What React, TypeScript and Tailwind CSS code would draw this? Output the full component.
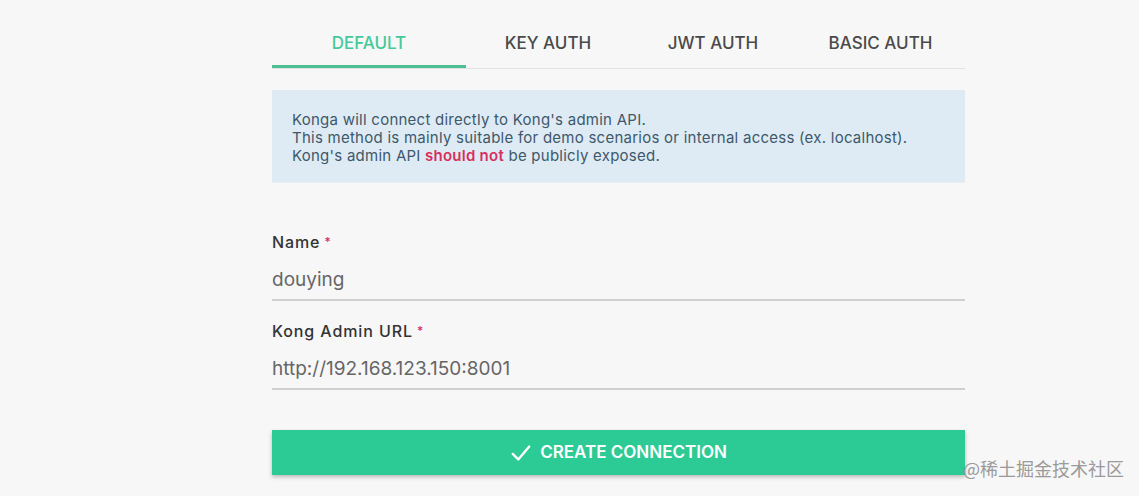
import React from 'react';

const tabs = [
  { label: 'DEFAULT', width: 'w-[194px]', active: true },
  { label: 'KEY AUTH', width: 'w-[164px]', active: false },
  { label: 'JWT AUTH', width: 'w-[166px]', active: false },
  { label: 'BASIC AUTH', width: 'w-[169px]', active: false },
];

const Field = ({ label, value }: { label: string; value: string }) => (
  <div className="flex flex-col">
    <label className="text-[16px] font-medium text-[#333] leading-5 tracking-[0.9px]">
      {label}
      <span className="text-[#d6305c] text-[12px] align-top ml-1">*</span>
    </label>
    <div className="mt-[16px] text-[19px] text-[#666] leading-6">{value}</div>
    <div className="mt-[7px] h-[2px] bg-[#cfcfcf]" />
  </div>
);

const App = () => {
  return (
    <div className="w-[1139px] h-[496px] bg-[#f7f7f7] overflow-hidden relative font-['Inter',sans-serif]">
      <div className="ml-[272px] w-[693px] pt-[31px]">
        {/* Tabs */}
        <div className="flex border-b border-[#e2e2e2]">
          {tabs.map((t) => (
            <div
              key={t.label}
              className={`${t.width} h-[37px] flex items-start justify-center text-[17px] font-medium leading-5 pt-[2px] ${
                t.active ? 'text-[#45c99a] border-b-[3px] border-[#4ebf95] -mb-[2px]' : 'text-[#4a4a4a]'
              }`}
            >
              {t.label}
            </div>
          ))}
        </div>

        {/* Info */}
        <div className="mt-[21px] h-[93px] bg-[#deebf5] border-b border-[#e8eef2] pl-[20px] pt-[21px] text-[15px] leading-[18px] tracking-[0.25px] text-[#40586a]">
          <p>Konga will connect directly to Kong's admin API.</p>
          <p>This method is mainly suitable for demo scenarios or internal access (ex. localhost).</p>
          <p>
            Kong's admin API <span className="text-[#d6305c] font-semibold">should not</span> be publicly exposed.
          </p>
        </div>

        {/* Form */}
        <div className="mt-[49px] flex flex-col gap-[20px]">
          <Field label="Name" value="douying" />
          <Field label="Kong Admin URL" value="http://192.168.123.150:8001" />
        </div>

        <button className="mt-[40px] w-full h-[45px] bg-[#2ccb96] text-white shadow-[0_2px_4px_rgba(0,0,0,0.25)] flex items-center justify-center gap-[8px] text-[17px] font-semibold">
          <svg width="22" height="22" viewBox="0 0 24 24" fill="none" stroke="currentColor" strokeWidth="2.6" strokeLinecap="round" strokeLinejoin="round">
            <path d="M3 13l6 6L21 5" />
          </svg>
          <span>CREATE CONNECTION</span>
        </button>
      </div>

      <div className="absolute left-[963px] top-[456px] text-[18px] text-[#9a9a9a] font-['Noto_Sans_CJK_SC',sans-serif] leading-6">
        @稀土掘金技术社区
      </div>
    </div>
  );
};

export default App;
